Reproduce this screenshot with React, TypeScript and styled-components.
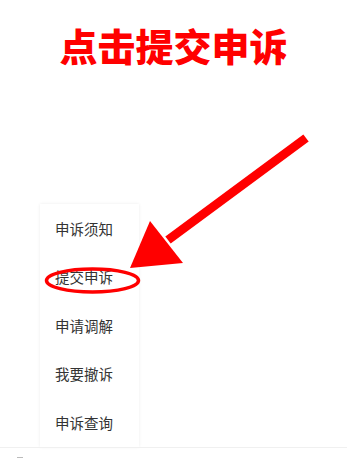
import styled, {createGlobalStyle} from "styled-components";

const GlobalStyle = createGlobalStyle`
    html, body {
        margin: 0;
        padding: 0;
        background: #ffffff;
    }
    body {
        font-family: "Noto Sans CJK SC", "Noto Sans", sans-serif;
    }
`

const Page = styled.div`
    position: relative;
    width: 347px;
    height: 459px;
    overflow: hidden;
    background: #ffffff;
`

const Title = styled.h1`
    margin: 0;
    padding-top: 26px;
    text-align: center;
    font-size: 38px;
    line-height: 38px;
    font-weight: 900;
    color: #ff0000;
    letter-spacing: 0;
`

const Menu = styled.ul`
    list-style: none;
    margin: 140px 0 0 40px;
    padding: 0;
    width: 99px;
    background: #ffffff;
    box-shadow: 0 0 3px rgba(0, 0, 0, 0.08);
`

const MenuItem = styled.li`
    height: 48.5px;
    display: flex;
    align-items: center;
    padding-left: 15px;
    font-size: 14.5px;
    color: #333333;
`

const Footer = styled.div`
    border-top: 1px solid #f0f0f0;
    height: 14px;
    position: relative;
`

const Overlay = styled.svg`
    position: absolute;
    left: 0;
    top: 0;
    pointer-events: none;
`

const items = ["申诉须知", "提交申诉", "申请调解", "我要撤诉", "申诉查询"];

const App = () => {
    return (
        <Page>
            <GlobalStyle/>
            <Title>点击提交申诉</Title>
            <Menu>
                {items.map((item) => (
                    <MenuItem key={item}>{item}</MenuItem>
                ))}
            </Menu>
            <Footer/>
            {/* red annotation: arrow + circle around the item */}
            <Overlay width="347" height="459" viewBox="0 0 347 459">
                <line x1="306" y1="138" x2="168" y2="240" stroke="#ff0000" strokeWidth="9"/>
                <polygon points="150,221 183,263 130,268" fill="#ff0000"/>
                <ellipse cx="92.5" cy="280.5" rx="46" ry="11.5" fill="none" stroke="#ff0000" strokeWidth="3.5"/>
                <line x1="17" y1="457.5" x2="23" y2="457.5" stroke="#bbbbbb" strokeWidth="1"/>
            </Overlay>
        </Page>
    )
}

export default App;
